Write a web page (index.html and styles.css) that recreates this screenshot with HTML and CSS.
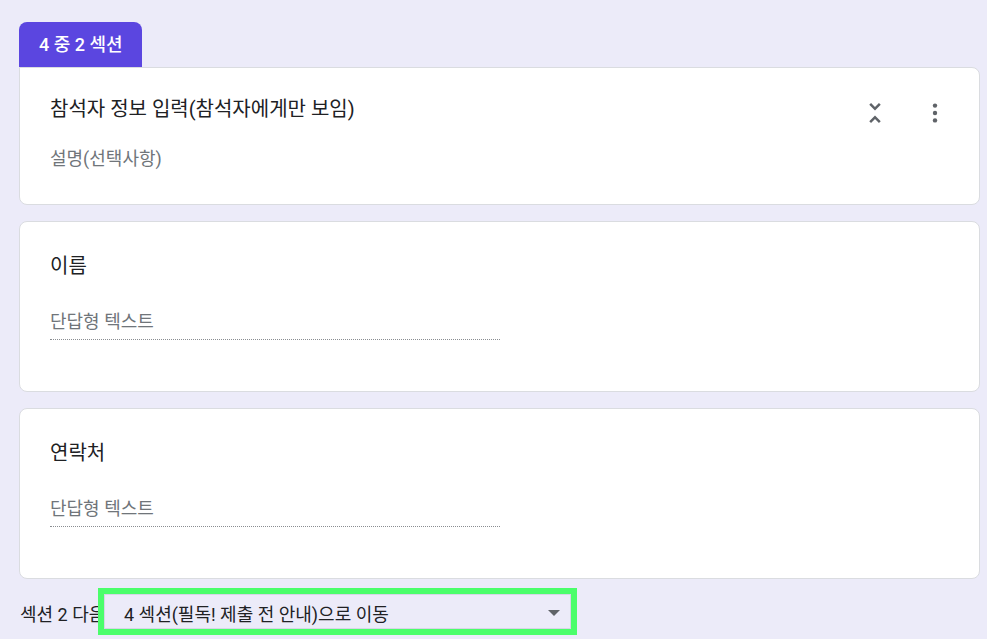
FILE: index.html
```html
<!DOCTYPE html>
<html lang="ko">
<head>
    <meta charset="UTF-8">
    <meta name="viewport" content="width=device-width, initial-scale=1.0">
    <title>섹션 편집</title>
    <link rel="stylesheet" href="styles.css">
</head>

<body>
    <div class="form">
        <div class="section-tab">4 중 2 섹션</div>
        <div class="card card-head">
            <div class="head-row">
                <div class="section-title">참석자 정보 입력(참석자에게만 보임)</div>
                <div class="head-actions">
                    <!-- 섹션 접기 -->
                    <button class="icon-btn" title="섹션 접기">
                        <svg width="30" height="30" viewBox="0 0 24 24"><path d="M7.41 18.59L8.83 20 12 16.83 15.17 20l1.41-1.41L12 14l-4.59 4.59zm9.18-13.18L15.17 4 12 7.17 8.83 4 7.41 5.41 12 10l4.59-4.59z"/></svg>
                    </button>
                    <!-- 더보기 -->
                    <button class="icon-btn" title="더보기">
                        <svg width="24" height="24" viewBox="0 0 24 24"><circle cx="12" cy="4.6" r="2.2"/><circle cx="12" cy="12" r="2.2"/><circle cx="12" cy="19.4" r="2.2"/></svg>
                    </button>
                </div>
            </div>
            <div class="section-desc">설명(선택사항)</div>
        </div>

        <div class="card question">
            <div class="q-title">이름</div>
            <div class="q-input">단답형 텍스트</div>
        </div>

        <div class="card question">
            <div class="q-title">연락처</div>
            <div class="q-input">단답형 텍스트</div>
        </div>

        <div class="next-row">
            <span class="next-label">섹션 2 다음에</span>
            <div class="next-select">
                <div class="select-box">
                    <span>4 섹션(필독! 제출 전 안내)으로 이동</span>
                    <span class="caret"></span>
                </div>
            </div>
        </div>
    </div>
</body>
</html>
```

FILE: styles.css
```css
html,body,div,span,button {
    margin: 0;
    padding: 0;
}
html,body {
    width: 100%;
    height: 100%;
}
body{
    background: #ecebf9;
    font-family: Roboto, "Noto Sans CJK KR", sans-serif;
    color: #202124;
    padding: 22px 7px 0 19px;
    box-sizing: border-box;
    overflow: hidden;
}
.section-tab{
    width: 123px;
    height: 45px;
    line-height: 45px;
    padding-left: 20px;
    box-sizing: border-box;
    background: #5b46e0;
    color: #fff;
    font-size: 18px;
    font-weight: 500;
    border-radius: 8px 8px 0 0;
}
.card{
    background: #fff;
    border: 1px solid #dadce0;
    border-radius: 8px;
}
.card-head{
    border-top-left-radius: 0;
    padding: 29px 20px 33px 30px;
}
.card-head .head-row{
    display: flex;
    align-items: flex-start;
    height: 24px;
}
.card-head .section-title{
    flex: 1;
    font-size: 20px;
    line-height: 24px;
}
.card-head .head-actions{
    display: flex;
    gap: 12px;
    margin-top: -8px;
}
.icon-btn{
    width: 48px;
    height: 48px;
    border: 0;
    background: none;
    display: flex;
    align-items: center;
    justify-content: center;
    cursor: pointer;
}
.icon-btn svg{
    fill: #5f6368;
}
.card-head .section-desc{
    margin-top: 26px;
    font-size: 18px;
    line-height: 24px;
    color: #70757a;
}
.question{
    margin-top: 16px;
    padding: 32px 30px 51px;
}
.question .q-title{
    font-size: 20px;
    line-height: 24px;
}
.question .q-input{
    width: 450px;
    margin-top: 32px;
    padding-bottom: 5px;
    border-bottom: 1px dotted #8a8d91;
    font-size: 18px;
    line-height: 24px;
    color: #70757a;
}
.next-row{
    position: relative;
    height: 47px;
    margin-top: 9px;
    display: flex;
    align-items: center;
}
.next-label{
    margin-left: 1px;
    font-size: 18px;
    padding-top: 3px;
}
/* 이동할 섹션 선택 (강조 표시) */
.next-select{
    position: absolute;
    left: 79px;
    top: 0;
    width: 479px;
    height: 47px;
    border: 6px solid #4bfe6b;
    box-sizing: border-box;
    background: #ecebf9;
}
.select-box{
    height: 100%;
    border: 1px solid #d6d6e6;
    box-sizing: border-box;
    display: flex;
    align-items: center;
    justify-content: space-between;
    padding: 3px 10px 0 19px;
    font-size: 18px;
    color: #202124;
}
.caret{
    width: 0;
    height: 0;
    border-left: 6px solid transparent;
    border-right: 6px solid transparent;
    border-top: 6px solid #5f6368;
}
```
